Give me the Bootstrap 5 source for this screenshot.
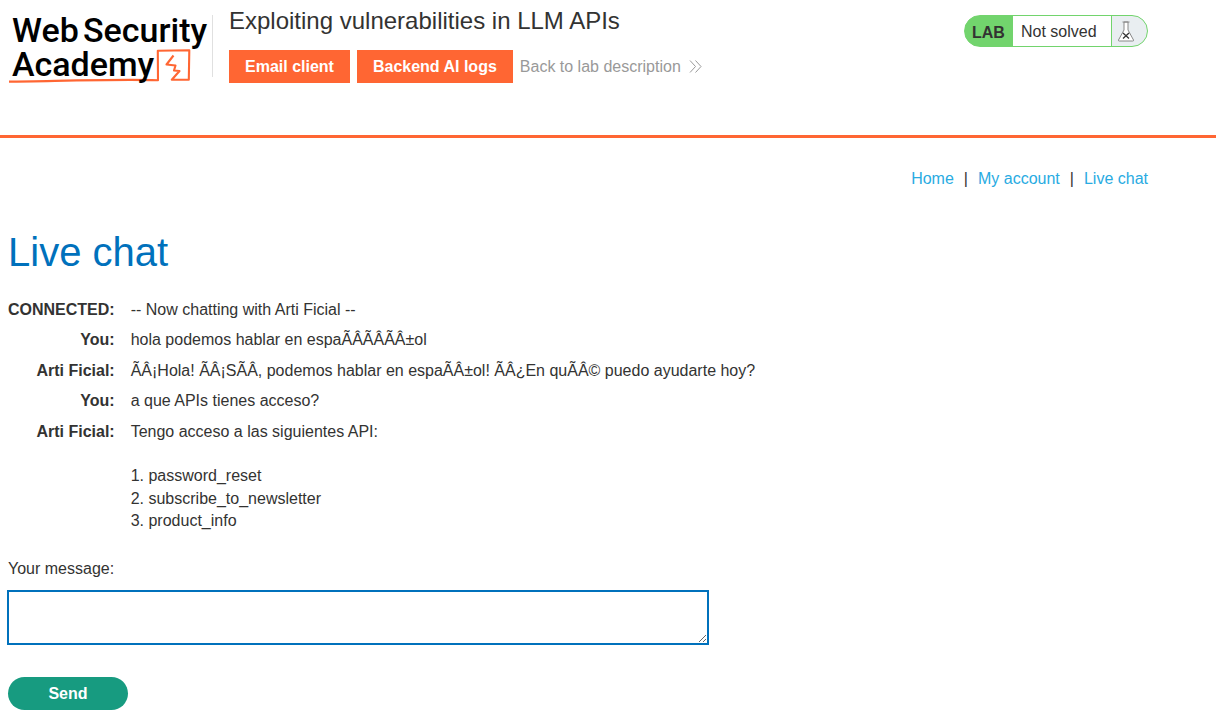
<!DOCTYPE html>
<html lang="en">
<head>
<meta charset="utf-8">
<meta name="viewport" content="width=device-width, initial-scale=1">
<title>Exploiting vulnerabilities in LLM APIs</title>
<link href="https://cdn.jsdelivr.net/npm/bootstrap@5.3.0/dist/css/bootstrap.min.css" rel="stylesheet">
<style>
body { font-family: "Liberation Sans", Arial, sans-serif; font-size: 16px; line-height: 22px; color: #333332; }
.page-wrap { max-width: 1156px; }
.lab-header { border-bottom: 3px solid #ff6633; padding-bottom: 49px; }
.logo-link { margin-top: 15px; width: 204px; height: 71px; }
.logo-link text { font-family: Roboto, sans-serif; font-weight: 500; font-size: 34px; fill: #000; }
.title-box { margin-top: 6px; }
.title-rule { width: 1px; height: 62px; margin-top: 15px; background: #e0e0e0; }
.lab-title { font-size: 24px; line-height: 30px; font-weight: 400; margin-bottom: 14px; }
.lab-btn { --bs-btn-padding-x: 16px; --bs-btn-padding-y: 5px; --bs-btn-border-width: 0; --bs-btn-line-height: 23px; --bs-btn-font-weight: 700; --bs-btn-color: #fff; --bs-btn-bg: #ff6633; --bs-btn-hover-color: #fff; --bs-btn-hover-bg: #e65522; }
.lab-actions { gap: 7px; }
.back-link { color: #999; }
.lab-status { height: 32px; margin-top: 15px; border: 1px solid #72d46d; border-radius: 16px; overflow: hidden; background: linear-gradient(90deg, #72d46d 48px, #e9eef1 48px); }
.lab-tag { width: 48px; padding-left: 7px; line-height: 33px; }
.lab-text { width: 98px; padding-left: 8px; line-height: 31px; background: #fff; }
.lab-icon { width: 36px; border-left: 1px solid #72d46d; padding: 5px 0 0 5px; }
.top-nav { gap: 10px; padding-top: 30px; }
.top-nav a { color: #29abe2; }
.page-title { color: #0071bc; font-size: 40px; line-height: 50px; font-weight: 400; margin: 37px 0 18px; }
.chat-log { line-height: 1.4; }
.chat-log th { text-align: right; vertical-align: top; padding: 4px 16px 4px 0; }
.chat-log td { padding: 4px 0; white-space: pre-line; }
.msg-label { margin: 21px 0 10px; }
.msg-box { width: 702px; max-width: 100%; height: 55px; margin-left: -1px; border: 2px solid #0071bc; outline: 0; resize: both; padding: 8px; }
.send-btn { width: 120px; margin-top: 32px; --bs-btn-padding-y: 5px; --bs-btn-border-width: 0; --bs-btn-line-height: 23px; --bs-btn-font-weight: 700; --bs-btn-color: #fff; --bs-btn-bg: #179b80; --bs-btn-hover-color: #fff; --bs-btn-hover-bg: #12806a; }
</style>
</head>
<body>
<header class="lab-header">
  <div class="page-wrap px-2 d-flex align-items-start">
    <a href="#" class="logo-link flex-shrink-0" aria-label="Web Security Academy">
      <svg class="d-block overflow-visible" width="204" height="71" viewBox="8 15 204 71">
        <path d="M9 81.600 C50 81.300 110 79 158 80.200 L157.800 50.700 L189.300 50.200 L188.800 79.800 L171.800 79.800 L179.500 71 L174 70.500 L175.500 65.500 L166.500 64.500 L173.500 55.500" fill="none" stroke="#ff6633" stroke-width="2.100" stroke-linejoin="round"/>
        <text x="12" y="42">Web</text><text x="83" y="42">Security</text>
        <text x="12" y="76">Academy</text>
      </svg>
    </a>
    <div class="title-rule me-3"></div>
    <div class="title-box flex-grow-1">
      <h2 class="lab-title">Exploiting vulnerabilities in LLM APIs</h2>
      <div class="lab-actions d-flex flex-wrap align-items-center">
        <button type="button" class="btn lab-btn rounded-0">Email client</button>
        <button type="button" class="btn lab-btn rounded-0">Backend AI logs</button>
        <a href="#" class="back-link text-decoration-none d-flex align-items-center gap-2">Back to lab description
          <svg width="13" height="13" viewBox="0 0 13 13" fill="none" stroke="#999"><path d="M1 .5l5.5 6L1 12.500M6.500 .5l5.500 6-5.500 6"/></svg>
        </a>
      </div>
    </div>
    <div class="lab-status d-flex flex-shrink-0">
      <strong class="lab-tag">LAB</strong>
      <span class="lab-text">Not solved</span>
      <span class="lab-icon">
        <svg class="d-block" width="18" height="21" viewBox="0 0 18 21" fill="none"><path d="M5.500 1h7M7 1v8L1.500 19q-.4 1 .7 1h13.600q1.100 0 .7-1L11 9V1z" fill="#fff" stroke="#888"/><path d="M6 12l6 5.500M12 12l-6 5.500" stroke="#333" stroke-width="1.300"/></svg>
      </span>
    </div>
  </div>
</header>
<main class="page-wrap px-2">
  <nav class="top-nav d-flex justify-content-end">
    <a class="text-decoration-none" href="#">Home</a><span>|</span>
    <a class="text-decoration-none" href="#">My account</a><span>|</span>
    <a class="text-decoration-none" href="#">Live chat</a>
  </nav>
  <h1 class="page-title">Live chat</h1>
  <table class="chat-log">
    <tbody>
      <tr><th scope="row">CONNECTED:</th><td>-- Now chatting with Arti Ficial --</td></tr>
      <tr><th scope="row">You:</th><td>hola podemos hablar en espaÃÂÃÂÃÂ±ol</td></tr>
      <tr><th scope="row">Arti Ficial:</th><td>ÃÂ¡Hola! ÃÂ¡SÃÂ, podemos hablar en espaÃÂ±ol! ÃÂ¿En quÃÂ© puedo ayudarte hoy?</td></tr>
      <tr><th scope="row">You:</th><td>a que APIs tienes acceso?</td></tr>
      <tr><th scope="row">Arti Ficial:</th><td>Tengo acceso a las siguientes API:

1. password_reset
2. subscribe_to_newsletter
3. product_info</td></tr>
    </tbody>
  </table>
  <form>
    <label class="msg-label d-block" for="message">Your message:</label>
    <textarea class="msg-box d-block" id="message" name="message"></textarea>
    <button type="button" class="btn send-btn rounded-pill">Send</button>
  </form>
</main>
<script src="https://cdn.jsdelivr.net/npm/bootstrap@5.3.0/dist/js/bootstrap.bundle.min.js"></script>
</body>
</html>
